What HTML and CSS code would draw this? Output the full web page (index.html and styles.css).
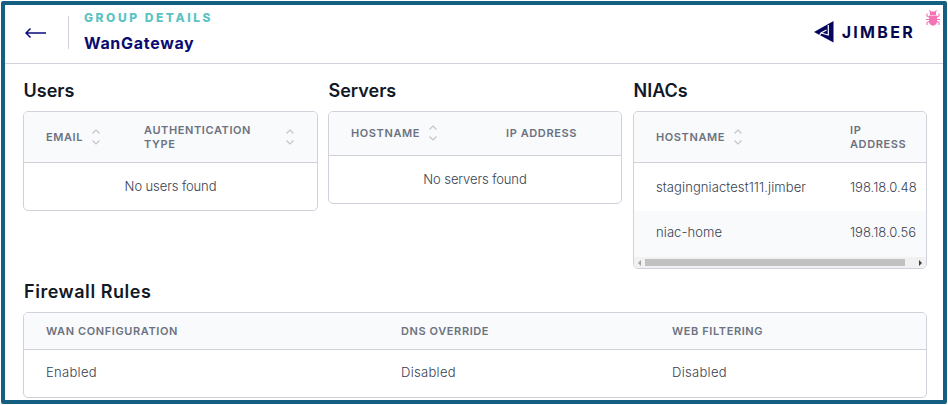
FILE: index.html
```html
<!DOCTYPE html>
<html lang="en">
<head>
<meta charset="utf-8">
<title>WanGateway</title>
<link rel="stylesheet" href="styles.css">
</head>
<body>
<svg width="0" height="0" class="defs" aria-hidden="true">
  <symbol id="sort" viewBox="0 0 10 18"><path d="M1.500 5.500 5 2l3.500 3.500M1.500 12.500 5 16l3.500-3.500"/></symbol>
</svg>
<div class="frame">
  <header class="top">
    <svg class="back" viewBox="0 0 22 12"><path d="M21 6H1M5.500 1.500 1 6l4.500 4.500"/></svg>
    <div class="title">
      <div class="kicker">GROUP DETAILS</div>
      <div class="name">WanGateway</div>
    </div>
    <div class="brand">
      <svg class="mark" viewBox="0 0 20 22"><path d="M0 11 19.500 0v21.500Z"/><path class="cut" d="M14.300 4v10L7 12M12.500 9 7 12l-1.500 2.500"/></svg>
      <span>JIMBER</span>
    </div>
    <svg class="bug" viewBox="0 0 14 16"><g class="legs"><path d="M4 7.500 1 6V3.500M10 7.500 13 6V3.500M4 9.500H0M10 9.500h4M4 11l-3 1.500V15M10 11l3 1.500V15"/></g><path d="M4 0l1 1.500h4L10 0l.8.5-.8 2V5H4V2.500L3.200.5Z"/><path d="M3 5.500h8v6c0 5.500-8 5.500-8 0Z"/></svg>
  </header>
  <main>
    <div class="cols">
      <section>
        <h2>Users</h2>
        <div class="card users">
          <div class="row head two"><div class="cell"><span>EMAIL</span><svg class="sort"><use href="#sort"/></svg></div><div class="cell auth"><span>AUTHENTICATION TYPE</span><svg class="sort"><use href="#sort"/></svg></div></div>
          <div class="empty">No users found</div>
        </div>
      </section>
      <section>
        <h2>Servers</h2>
        <div class="card servers">
          <div class="row head"><div class="cell"><span>HOSTNAME</span><svg class="sort"><use href="#sort"/></svg></div><div class="cell"><span>IP ADDRESS</span></div></div>
          <div class="empty">No servers found</div>
        </div>
      </section>
      <section>
        <h2>NIACs</h2>
        <div class="card niacs">
          <div class="row head two"><div class="cell"><span>HOSTNAME</span><svg class="sort"><use href="#sort"/></svg></div><div class="cell"><span>IP<br>ADDRESS</span></div></div>
          <div class="row data"><div class="cell">stagingniactest111.jimber</div><div class="cell ip">198.18.0.48</div></div>
          <div class="row data alt"><div class="cell">niac-home</div><div class="cell ip">198.18.0.56</div></div>
          <div class="scroll"><i class="left"></i><b></b><i class="right"></i></div>
        </div>
      </section>
    </div>
    <section class="rules">
      <h2>Firewall Rules</h2>
      <div class="card firewall">
        <div class="row head"><div class="cell"><span>WAN CONFIGURATION</span></div><div class="cell"><span>DNS OVERRIDE</span></div><div class="cell"><span>WEB FILTERING</span></div></div>
        <div class="row data"><div class="cell">Enabled</div><div class="cell">Disabled</div><div class="cell">Disabled</div></div>
      </div>
    </section>
  </main>
</div>
</body>
</html>
```

FILE: styles.css
```css
* { box-sizing: border-box; }
body { margin: 0; height: 405px; overflow: hidden; padding: 1px; background: #fff; font-family: Inter, "Open Sans", sans-serif; }
.defs { position: absolute; }
.frame { width: 946px; height: 403px; border: 4px solid #156082; border-radius: 2px; background: #fff; overflow: hidden; }
.top { height: 59px; border-bottom: 1px solid #d1d1db; display: flex; position: relative; padding-left: 20px; }
.back { width: 22px; height: 12px; margin-top: 22px; fill: none; stroke: #0b0b7f; stroke-width: 1.5; }
.title { margin: 11px 0 0 21px; height: 33px; border-left: 1px solid #d1d1db; padding-left: 15px; }
.kicker { margin-top: -7px; font-size: 12px; line-height: 17px; font-weight: 800; letter-spacing: 2.550px; color: #5bc3c3; }
.name { margin-top: 7px; font-size: 16px; line-height: 20px; font-weight: 700; letter-spacing: .7px; color: #0b0b6f; white-space: nowrap; }
.brand { margin: 16px 28px 0 auto; display: flex; height: 22px; color: #06064f; font-size: 16px; line-height: 22px; font-weight: 700; letter-spacing: 2.300px; }
.mark { width: 20px; height: 22px; fill: #06065f; margin-right: 8px; }
.cut { fill: none; stroke: #fff; stroke-width: 1.2; }
.bug { position: absolute; right: 3px; top: 5px; width: 14px; height: 16px; fill: #f472b6; }
.legs { fill: none; stroke: #f472b6; stroke-width: 1.1; }
main { padding: 15px 16px 0 18px; }
.cols { display: grid; grid-template-columns: 295px 294px 294px; column-gap: 10px; height: 190px; align-items: start; }
.cols section:last-child { margin-left: 1px; margin-right: -1px; }
h2 { margin: 0 0 8px; padding-left: 1px; font-size: 18px; line-height: 24px; font-weight: 600; color: #111827; }
.cols h2 { padding-left: 0.5px; line-height: 23px; margin-bottom: 9px; }
.card { border: 1px solid #d1d1db; border-radius: 5px; overflow: hidden; }
.row { display: grid; align-items: center; padding-left: 22px; }
.head { background: #f9fafb; border-bottom: 1px solid #d1d1db; font-size: 11px; line-height: 14px; font-weight: 600; color: #6b7280; letter-spacing: .6px; }
.cell { display: flex; align-items: center; white-space: nowrap; }
.sort { width: 10px; height: 18px; margin-left: 8px; fill: none; stroke: #c5c5cb; stroke-width: 1.2; }
.empty { height: 47px; line-height: 47px; text-align: center; font-size: 13px; font-weight: 300; letter-spacing: -.1px; color: #374151; }
.data { height: 46px; font-size: 13px; font-weight: 300; color: #374151; }
.two { height: 51px; padding-bottom: 1px; }
.users .row { grid-template-columns: 98px 151px; }
.auth { justify-content: space-between; }
.auth span { width: 120px; white-space: normal; }
.servers .row { height: 44px; padding-bottom: 2px; grid-template-columns: 155px 1fr; }
.niacs .row { grid-template-columns: 194px 1fr; }
.niacs .data { height: 48px; padding-bottom: 1px; letter-spacing: .1px; }
.niacs .alt { height: 46px; padding-bottom: 4px; background: #f9fafb; }
.niacs .ip { letter-spacing: 0; }
.scroll { height: 11px; background: #f1f1f1; display: flex; align-items: center; padding: 0 4px; }
.scroll b { width: 260px; height: 7px; margin-left: 4px; background: #c1c1c1; }
.left, .right { border: 3px solid transparent; border-left-width: 0; border-right: 3px solid #a3a3a3; }
.right { margin-left: auto; border-right-width: 0; border-left: 3px solid #404040; }
.rules { padding-top: 11px; }
.rules h2 { letter-spacing: .55px; }
.firewall .row { grid-template-columns: 355px 271px 1fr; }
.firewall .head { height: 37px; padding-bottom: 1px; }
.firewall .data { height: 47px; padding-bottom: 3px; letter-spacing: .3px; }
```
